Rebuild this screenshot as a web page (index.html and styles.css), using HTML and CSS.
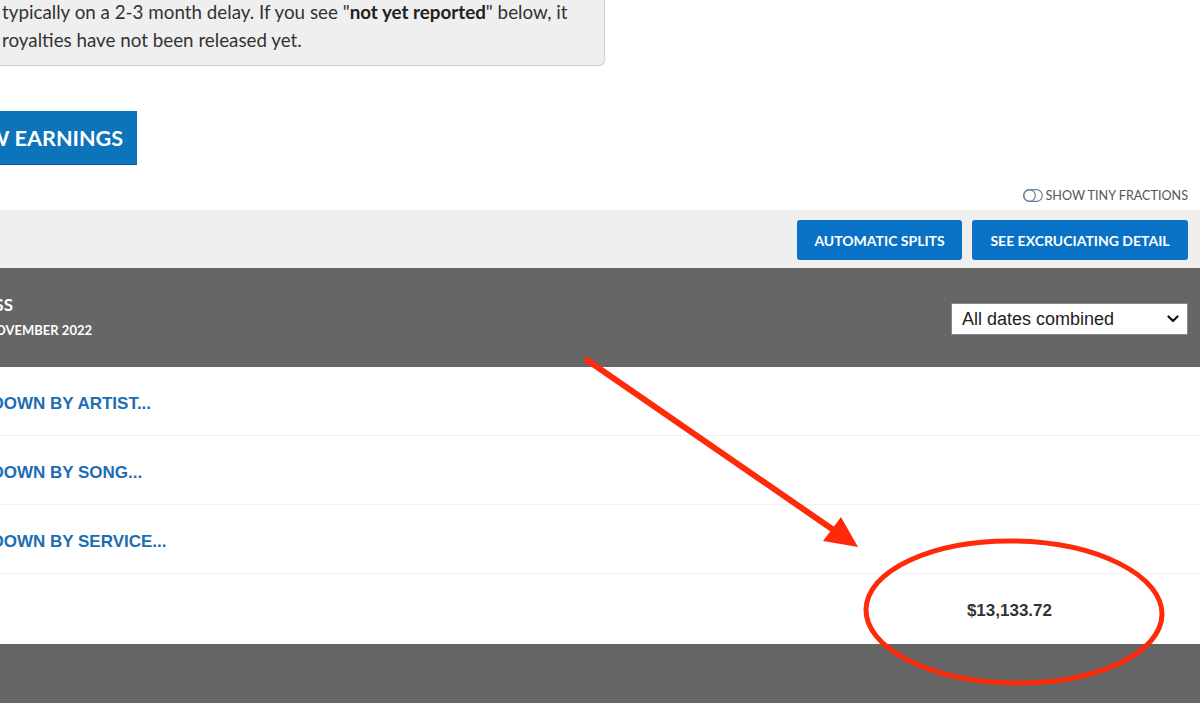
FILE: index.html
```html
<!DOCTYPE html>
<html>
<head>
<meta charset="utf-8">
<link rel="stylesheet" href="styles.css">
</head>
<body>
<div class="page">
  <div class="notice">
    <p>typically on a 2-3 month delay. If you see "<b>not yet reported</b>" below, it<br>royalties have not been released yet.</p>
  </div>

  <div class="cta-row">
    <a class="cta">VIEW EARNINGS</a>
  </div>

  <div class="fractions">
    <svg class="toggle" width="20" height="13" viewBox="0 0 20 13"><rect x="0.7" y="0.7" width="18.6" height="11.6" rx="5.8" fill="none" stroke="#6b7f99" stroke-width="1.2"/><circle cx="6.5" cy="6.5" r="5.8" fill="none" stroke="#6b7f99" stroke-width="1.2"/></svg>
    <span>SHOW TINY FRACTIONS</span>
  </div>

  <div class="toolbar">
    <a class="tbtn splits">AUTOMATIC SPLITS</a>
    <a class="tbtn detail">SEE EXCRUCIATING DETAIL</a>
  </div>

  <div class="panel-head">
    <div class="titles">
      <div class="title">YOUR EARNINGS PROGRESS</div>
      <div class="subtitle">JANUARY 2019 - NOVEMBER 2022</div>
    </div>
    <div class="select">
      <span>All dates combined</span>
      <svg width="12" height="8" viewBox="0 0 12 8"><polyline points="1.5,1.5 6,6 10.5,1.5" fill="none" stroke="#111" stroke-width="2.2" stroke-linecap="round" stroke-linejoin="round"/></svg>
    </div>
  </div>

  <div class="rows">
    <div class="row"><a class="link">BREAKDOWN BY ARTIST...</a></div>
    <div class="row"><a class="link">BREAKDOWN BY SONG...</a></div>
    <div class="row"><a class="link">BREAKDOWN BY SERVICE...</a></div>
    <div class="row total"><span class="amount">$13,133.72</span></div>
  </div>

  <div class="footer"></div>
</div>

<svg class="annot" width="1200" height="703" viewBox="0 0 1200 703">
  <line x1="587" y1="360" x2="835" y2="531" stroke="#fe2a0a" stroke-width="6" stroke-linecap="round"/>
  <polygon points="823,541 858,547 841,517" fill="#fe2a0a"/>
  <ellipse cx="1014" cy="612" rx="148" ry="71" fill="none" stroke="#fe2a0a" stroke-width="5" transform="rotate(1 1014 612)"/>
</svg>
</body>
</html>
```
FILE: styles.css
```css
* { box-sizing: border-box; }
html, body { margin: 0; padding: 0; }
body {
  width: 1200px;
  height: 703px;
  overflow: hidden;
  background: #fff;
  font-family: Lato, "Liberation Sans", sans-serif;
  position: relative;
}
.page { width: 1200px; }

.notice {
  width: 625px;
  margin-left: -20px;
  margin-top: -2px;
  padding: 0 0 11px 21px;
  background: #efefef;
  border: 1px solid #cfcfcf;
  border-top: none;
  border-radius: 0 0 6px 6px;
}
.notice p {
  margin: 0;
  font-size: 18.8px;
  line-height: 28px;
  color: #333;
  white-space: nowrap;
}
.notice b { font-weight: 700; color: #222; }

.cta-row { margin-top: 45px; height: 54px; }
.cta {
  display: inline-flex;
  align-items: center;
  height: 54px;
  margin-left: -63px;
  padding: 0 14px 0 16px;
  background: #0c74bb;
  color: #fff;
  font-weight: 700;
  font-size: 21.6px;
  white-space: nowrap;
  border-bottom: 1px solid #0a5e99;
}

.fractions {
  display: flex;
  justify-content: flex-end;
  align-items: center;
  gap: 3px;
  height: 45px;
  padding: 15px 12px 0 0;
  font-size: 12.6px;
  color: #555;
}
.toggle { display: block; }

.toolbar {
  display: flex;
  justify-content: flex-end;
  align-items: center;
  gap: 10px;
  height: 58px;
  padding-right: 12px;
  background: #efefef;
}
.tbtn {
  display: inline-flex;
  align-items: center;
  justify-content: center;
  height: 40px;
  margin-top: 2px;
  background: #0a72c6;
  border-radius: 3px;
  color: #fff;
  font-weight: 700;
  font-size: 14px;
  white-space: nowrap;
}
.splits { width: 165px; }
.detail { width: 216px; }

.panel-head {
  display: flex;
  justify-content: space-between;
  align-items: flex-start;
  height: 99px;
  padding: 35px 12px 0 0;
  background: #666;
  color: #fff;
}
.titles {
  width: 300px;
  margin-left: -290px;
  margin-top: -10px;
  text-align: right;
}
.title {
  font-size: 17px;
  font-weight: 700;
  line-height: 24px;
  margin-right: -3px;
  white-space: nowrap;
}
.subtitle {
  font-size: 13px;
  font-weight: 700;
  line-height: 16px;
  margin-top: 5px;
  margin-right: -82px;
  white-space: nowrap;
}
.select {
  display: flex;
  align-items: center;
  justify-content: space-between;
  width: 237px;
  height: 32px;
  padding: 0 8px 0 10px;
  background: #fff;
  border: 1px solid #888;
  color: #222;
  font-family: "Liberation Sans", Arial, sans-serif;
  font-size: 18px;
}

.rows { background: #fff; }
.row {
  display: flex;
  align-items: center;
  height: 69px;
  padding-top: 5px;
  border-bottom: 1px solid #eef1f4;
}
.link {
  margin-left: -69px;
  font-family: "Liberation Sans", Arial, sans-serif;
  font-weight: 700;
  font-size: 17px;
  color: #1d6db3;
  white-space: nowrap;
}
.row.total {
  height: 70px;
  padding-top: 3px;
  border-bottom: none;
  justify-content: flex-end;
  padding-right: 148px;
}
.amount {
  font-family: "Liberation Sans", Arial, sans-serif;
  font-weight: 700;
  font-size: 17px;
  color: #333;
}
.footer { height: 80px; background: #666; }

.annot { position: absolute; left: 0; top: 0; pointer-events: none; }
```
